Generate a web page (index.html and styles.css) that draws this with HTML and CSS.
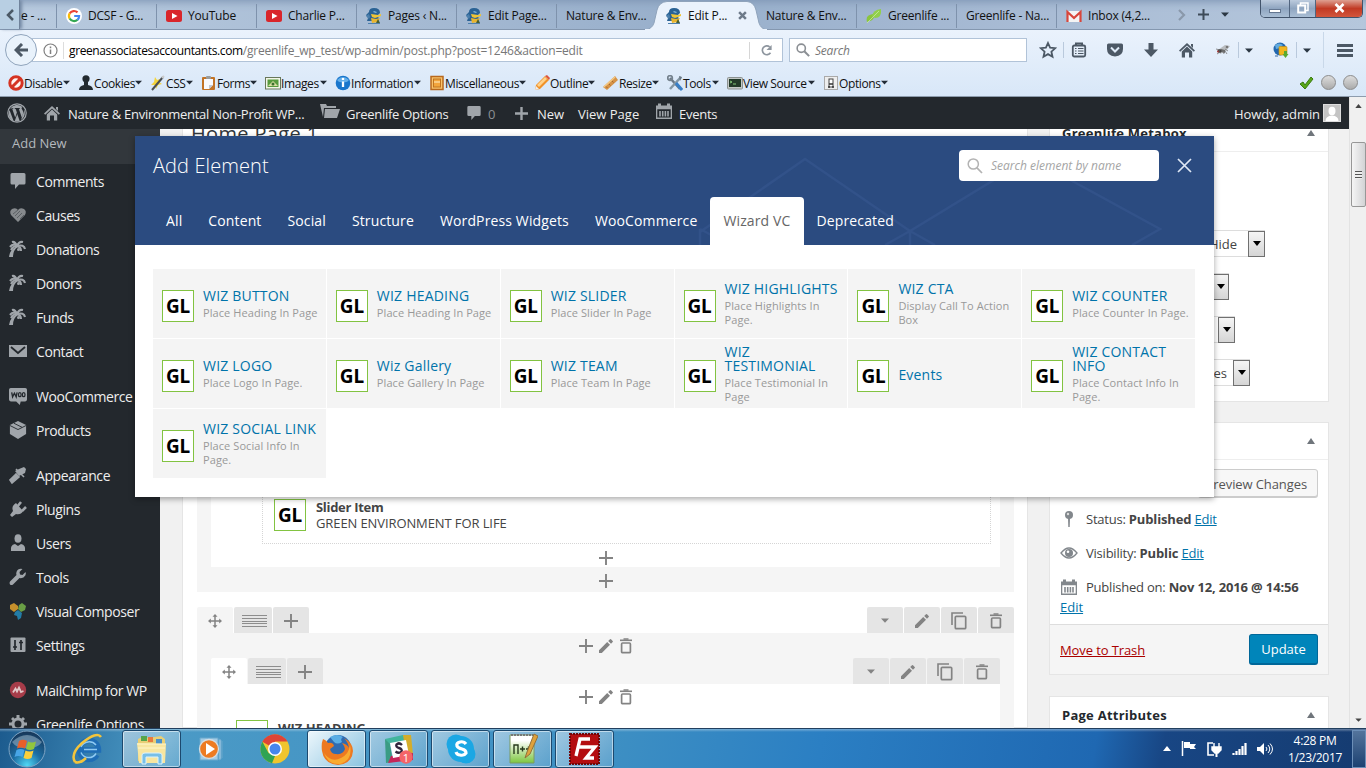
FILE: index.html
```html
<!DOCTYPE html>
<html lang="en">
<head>
<meta charset="utf-8">
<title>Edit Page</title>
<link rel="stylesheet" href="styles.css">
</head>
<body>
<svg class="defs" width="0" height="0">
<symbol id="google" viewBox="0 0 16 16"><circle cx="8" cy="8" r="8" fill="#fff"/><path d="M3.7 5.5A5 5 0 0 1 11.5 4.4" stroke="#ea4335" stroke-width="2.2" fill="none"/><path d="M3.7 5.4a5 5 0 0 0 0 5.2" stroke="#fbbc05" stroke-width="2.2" fill="none"/><path d="M3.7 10.5a5 5 0 0 0 7.8 1.2" stroke="#34a853" stroke-width="2.2" fill="none"/><path d="M8.2 8h4.9a5 5 0 0 1-1.7 3.8" stroke="#4285f4" stroke-width="2.2" fill="none"/></symbol>
<symbol id="yt" viewBox="0 0 16 16"><rect y="2" width="16" height="12" rx="2.5" fill="#d9252a"/><path d="M6 5l5.5 3L6 11z" fill="#fff"/></symbol>
<symbol id="gator" viewBox="0 0 16 16"><path d="M3 4Q3 0 8 0q6 0 6 5l-2 2 1 6H1l1-3-2-3z" fill="#2a6294"/><path d="M5 6l7 1 3-1v2l-6 2-3-1z" fill="#f0c534"/><path d="M5 10l5 1 4-1-2 4-6 1z" fill="#e9b52d"/><path d="M0 8l3-2 1 3-1 2zM2 15h12v1H2z" fill="#4d80ad"/><path d="M8 3l3 1-1 1-3-1z" fill="#7fb5dc"/><path d="M12 11l2 4h-4z" fill="#4a5f32"/></symbol>
<symbol id="leaf" viewBox="0 0 16 16"><path d="M1 14Q-1 7 7 6l1 3q-1 4-5 4z" fill="#8ac53e"/><path d="M6 8Q7 2 15 1q1 9-6 9z" fill="#91cf4c"/><path d="M1 15l12-12" stroke="#c8eaa2" stroke-width=".8" fill="none"/></symbol>
<symbol id="gmail" viewBox="0 0 16 16"><path d="M1 3h14v11H1z" fill="#f4f4f4"/><path d="M1.500 14V4L8 10l6.500-6v10" fill="none" stroke="#d8463b" stroke-width="2.2"/></symbol>
<symbol id="caret" viewBox="0 0 8 5"><path d="M0 .5h8L4 4.8z" fill="currentColor"/></symbol>
<symbol id="reload" viewBox="0 0 14 14"><path d="M11.3 9.5A4.8 4.8 0 1 1 10.4 3" fill="none" stroke="#8d959e" stroke-width="1.8"/><path d="M12.5 1v5.5H7z" fill="#8d959e"/></symbol>
<symbol id="mag" viewBox="0 0 16 16"><circle cx="6" cy="6" r="4.7" fill="none" stroke="currentColor" stroke-width="1.8"/><path d="M9.5 9.5l5.5 5.5" stroke="currentColor" stroke-width="2.4"/></symbol>
<symbol id="magthin" viewBox="0 0 16 16"><circle cx="6.3" cy="6" r="5.1" fill="none" stroke="#b3b3b3" stroke-width="1.5"/><path d="M10 9.8l5 5.2" stroke="#b3b3b3" stroke-width="1.7"/></symbol>
<symbol id="star" viewBox="0 0 18 18"><path d="M9 2l2.1 4.7 5.1.5-3.8 3.5 1.1 5-4.5-2.6-4.5 2.6 1.1-5L1.8 7.2l5.1-.5z" fill="none" stroke="#4c5865" stroke-width="1.8"/></symbol>
<symbol id="list" viewBox="0 0 16 16"><path d="M5 3V1.5h6V3" fill="none" stroke="#4c5865" stroke-width="2"/><rect x="1.8" y="3.5" width="12.4" height="11" rx="1.5" fill="#e3edf9" stroke="#4c5865" stroke-width="1.8"/><path d="M4 6.500h1.500M7 6.500h5.500M4 9h1.500M7 9h5.500M4 11.500h1.500M7 11.500h5.500" stroke="#4c5865" stroke-width="1.2"/></symbol>
<symbol id="pocket" viewBox="0 0 16 16"><path d="M1.5 1.5h13Q16 1.5 16 3v4q0 7-8 7.5Q0 14 0 7V3q0-1.500 1.500-1.500z" fill="#4c5865"/><path d="M4 5.500l4 4 4-4" fill="none" stroke="#dfebf8" stroke-width="2"/></symbol>
<symbol id="down" viewBox="0 0 16 16"><path d="M5.500 1h5v6.500H15L8 15 1 7.500h4.500z" fill="#4c5865"/></symbol>
<symbol id="home" viewBox="0 0 16 16"><path d="M0 8.500L8 1l8 7.500-1.200 1.200L8 3.400 1.200 9.700zM12 2h2v4l-2-2z" fill="currentColor"/><path d="M2.800 9.400L8 4.500l5.200 4.900V15.500H10V10.500H6v5H2.800z" fill="currentColor"/></symbol>
<symbol id="fly" viewBox="0 0 16 16"><path d="M3 8l7-5 5 1-4 5-6 3z" fill="#b9bcbf"/><path d="M6 7l4 1 0 3-4-1z" fill="#6b6b6b"/><circle cx="4.500" cy="9" r="2" fill="#444"/><circle cx="12" cy="5" r="1.300" fill="#777"/><path d="M1 7l4 1M2 12l3-2M9 12l-1-3M13 9l-3-2M12 12l-2-3" stroke="#777" stroke-width=".8"/><circle cx="3" cy="9.500" r=".9" fill="#a33"/></symbol>
<symbol id="globe" viewBox="0 0 16 16"><circle cx="7" cy="7" r="6.500" fill="#2267ae"/><path d="M2 3q4-3 8 0l-3 3-4 1z" fill="#62abdf"/><rect x="6" y="4.500" width="8" height="8.500" rx="1" fill="#f2b51d" stroke="#c58b0d" stroke-width=".6"/><path d="M11 9h3v3h1.500l-3 4-3-4H11z" fill="#5aa92e"/><path d="M2 14h3" stroke="#3468a4"/></symbol>
<symbol id="pic-no" viewBox="0 0 16 16"><circle cx="8" cy="8" r="6.200" fill="#fff4f0" stroke="#d53322" stroke-width="3"/><path d="M4 12l8-8" stroke="#d53322" stroke-width="3"/></symbol>
<symbol id="pic-man" viewBox="0 0 16 16"><circle cx="8" cy="3.800" r="3.600" fill="#222a2f"/><path d="M6 6h4v4q5 1 5 5H1q0-4 5-5z" fill="#222a2f"/></symbol>
<symbol id="pic-css" viewBox="0 0 16 16"><path d="M5 2l2 3 3-1-1 3 3 2-4 1-2 4-1-4-4 0 3-3z" fill="#f3d43c"/><path d="M2 15L13 2" stroke="#4b5053" stroke-width="2"/><path d="M12 3l2-2" stroke="#ccc" stroke-width="2"/></symbol>
<symbol id="pic-forms" viewBox="0 0 16 16"><rect x="1" y="2" width="13" height="13" rx="1" fill="#c27326"/><path d="M3 4h9v6l-4 4H3z" fill="#f8faff"/><path d="M12 10l-4 4v-4z" fill="#bcc9d8"/><rect x="5" y="1" width="5" height="3" rx="1" fill="#9a9c9c"/></symbol>
<symbol id="pic-img" viewBox="0 0 16 16"><rect x=".5" y="2.500" width="15" height="11.500" fill="#f3f6e8" stroke="#69785b"/><rect x="2.500" y="4.500" width="11" height="7.500" fill="#579a3d"/><path d="M3 11l5-5 5 5z" fill="#d9dda0"/><circle cx="8" cy="9" r="1.500" fill="#3a702d"/></symbol>
<symbol id="pic-info" viewBox="0 0 16 16"><circle cx="8" cy="8" r="7.300" fill="#1976cc"/><path d="M2 5q6-6 12 0-2 3-6 2-4 1-6-2z" fill="#64afea"/><path d="M8 6.500V12M8 3v2" stroke="#fff" stroke-width="2.300"/></symbol>
<symbol id="pic-misc" viewBox="0 0 16 16"><rect x="2" y="1.500" width="12" height="13" fill="#f9c36b" stroke="#b8681d" stroke-width="1.500"/><rect x="4.500" y="4" width="7" height="8" fill="#f3a53c" stroke="#bf7421"/><path d="M5 7h6" stroke="#fff0c8"/></symbol>
<symbol id="pic-pencil" viewBox="0 0 16 16"><path d="M1 15l1-5L11 1l4 4-9 9z" fill="#f09128"/><path d="M3 10l8-8 2 2-8 8z" fill="#ffd18a"/><path d="M11 1l4 4 1-2-3-3z" fill="#dd563d"/><path d="M1 15l1-4 3 3z" fill="#eee"/></symbol>
<symbol id="pic-ruler" viewBox="0 0 16 16"><path d="M0 12L12 1l3 4L4 15z" fill="#d69347"/><path d="M1 12L12 2" stroke="#f4cb87" stroke-width="1.300"/><path d="M6 9l1.500 1.500M9 6l1.500 1.500M3 11.500l1.500 1.500" stroke="#a7692e"/></symbol>
<symbol id="pic-tools" viewBox="0 0 16 16"><path d="M3 3l10 11" stroke="#6b7986" stroke-width="2.500"/><circle cx="3" cy="3" r="2.300" fill="none" stroke="#75828e" stroke-width="1.800"/><path d="M14 2L3 14" stroke="#8597a3" stroke-width="2.500"/><path d="M9 8l6 7" stroke="#377fc8" stroke-width="3"/><path d="M12 1l3 1-2 4" fill="#6b7986"/></symbol>
<symbol id="pic-src" viewBox="0 0 16 16"><rect x=".5" y="2.500" width="15" height="11.500" rx="1" fill="#c3c8c6" stroke="#8c9291"/><rect x="2" y="4" width="12" height="8" fill="#233a28"/><path d="M3 6l2 1-2 1M6 9h3" stroke="#84c678" fill="none"/></symbol>
<symbol id="pic-opt" viewBox="0 0 16 16"><rect x="1.500" y="1.500" width="13" height="13" fill="#eee" stroke="#aaa"/><rect x="6" y="4" width="4" height="8" fill="#fff" stroke="#444"/><path d="M6 9h4M5 12h2M9 12h2" stroke="#333" stroke-width="1.500"/></symbol>
<symbol id="wp" viewBox="0 0 20 20"><circle cx="10" cy="10" r="9.200" fill="none" stroke="#a0a5aa" stroke-width="1.200"/><path d="M2.500 7l4.300 11.500q-5-2-5-8.500 0-1.600.7-3zM3.200 5.700A8.100 8.100 0 0 1 15.500 4q-1.300.5-.7 2l1 1.800q.7 1.600-.2 4.200l-.8 2.500L11.900 6l1-.2-.1-.7H7.800l-.1.700 1 .2 1.200 3.500-1.700 5L5.300 6l1-.2-.1-.7zM10.200 11l2.500 7q-2.500.8-4.900.1zM17.200 6.200q2.200 6.300-3.200 10.900l2.500-7.300q.7-2 .7-3.600z" fill="#a0a5aa"/></symbol>
<symbol id="folder" viewBox="0 0 20 16"><path d="M0 1h6l1 2h9v2H4L3 14z" fill="#a0a5aa"/><path d="M5 6h15l-3 9H4z" fill="#a0a5aa"/></symbol>
<symbol id="comment" viewBox="0 0 18 18"><path d="M3 1h12q1.500 0 1.500 1.500V11q0 1.500-1.500 1.500H10L6 17v-4.500H3Q1.500 12.500 1.500 11V2.500Q1.500 1 3 1z" fill="#a0a5aa"/></symbol>
<symbol id="cal" viewBox="0 0 18 18"><path d="M1 3.500h2V1.500h3v2h6v-2h3v2h2V17H1zM2.300 7.300v8.300h13.400V7.300z" fill="currentColor" fill-rule="evenodd"/><path d="M5 9v5.500M7.700 9v5.500M10.400 9v5.500M13 9v5.500" stroke="currentColor" stroke-width="1.600"/></symbol>
<symbol id="heart" viewBox="0 0 18 18"><path d="M9 16L2 9Q0 5 3 3q4-2 6 1 2-3 6-1 3 2 1 6z" fill="#868a8d"/><path d="M4 8l5-4M6 10l5-5M8 12l5-5M11 13l4-4" stroke="#5b6064"/></symbol>
<symbol id="palm" viewBox="0 0 18 18"><path d="M9 7Q4 10 4 17H0Q1 9 8 6z" fill="#a0a5aa"/><path d="M8 6Q4 3 1 7M8 6Q6 1 3 2M8 6q2-5 6-4M8 6q7-2 8 3M8 6q4 1 4 5M8 6Q4 6 2 10" stroke="#a0a5aa" stroke-width="2.100" fill="none"/><circle cx="9.500" cy="9.500" r="1.500" fill="#a0a5aa"/></symbol>
<symbol id="mail" viewBox="0 0 18 18"><path d="M0 3h18v12H0z" fill="#a0a5aa"/><path d="M2 5l7 6 7-6" stroke="#23282d" stroke-width="1.800" fill="none"/></symbol>
<symbol id="woo" viewBox="0 0 20 20"><path d="M2 1h16q2 0 2 2v11q0 2-2 2h-5l-1 4-4-4H2q-2 0-2-2V3q0-2 2-2z" fill="#a0a5aa"/><path d="M3 6l1 5 2-4 2 4 1-5" fill="none" stroke="#23282d" stroke-width="1.500"/><ellipse cx="12" cy="8.500" rx="1.500" ry="2.300" fill="none" stroke="#23282d" stroke-width="1.400"/><ellipse cx="16.300" cy="8.500" rx="1.500" ry="2.300" fill="none" stroke="#23282d" stroke-width="1.400"/></symbol>
<symbol id="box" viewBox="0 0 20 20"><path d="M10 0l9 4.500v10L10 20l-9-5.500v-10z" fill="#a0a5aa"/><path d="M1 5l9 4.500L19 5M5.500 2.500l9 4.500" stroke="#23282d" fill="none"/></symbol>
<symbol id="brush" viewBox="0 0 18 18"><path d="M10 3l5-2 2 2-1 4-6 3-4-5z" fill="#a0a5aa"/><path d="M7 3l8 8M7 8L1 14l2 3 7-6z" stroke="#a0a5aa" stroke-width="1.600" fill="#a0a5aa"/></symbol>
<symbol id="plug" viewBox="0 0 18 18"><path d="M7 3q-5 3-3 8l-3 4 2 2 4-3q5 1 7-3z" fill="#a0a5aa"/><path d="M8 7l4-5M13 11l4-4" stroke="#a0a5aa" stroke-width="2.600"/></symbol>
<symbol id="user" viewBox="0 0 18 18"><ellipse cx="9" cy="4.500" rx="3.500" ry="4.300" fill="#a0a5aa"/><path d="M2 17q-1-6 4-7l3 2 3-2q5 1 4 7z" fill="#a0a5aa"/></symbol>
<symbol id="wrench" viewBox="0 0 18 18"><path d="M16.500 4l-3 3-2.500-.5L10.500 4 13.500 1Q9 0 7.500 4q-.6 2 0 3L1 13.500q-1 1.500 0 3 1.500 1 3 0L10.500 10q4 .7 5.800-2.500 1-2 .2-3.500z" fill="#a0a5aa"/></symbol>
<symbol id="vc" viewBox="0 0 18 18"><path d="M1 3l4-2 4 3v3L5 10 1 7z" fill="#c6902c"/><path d="M10 3l3-2 4 3-1 4-4 2-3-3z" fill="#699e45"/><path d="M6 10l3-2 4 3-1 5-3 2-1-4-3-1z" fill="#237ca6"/></symbol>
<symbol id="sliders" viewBox="0 0 18 18"><rect x="1.500" y="1.500" width="15" height="14.500" rx="1" fill="#a0a5aa"/><path d="M6 4v10M12 4v10M4 11h4M10 6.500h4" stroke="#23282d" stroke-width="1.700"/></symbol>
<symbol id="chimp" viewBox="0 0 18 18"><circle cx="9" cy="9" r="8.200" fill="#a63c49"/><path d="M4 11.500l2.500-4 1.500 3 2-4 2 4.500 2.500-1" fill="none" stroke="#e2c8c9" stroke-width="1.800"/></symbol>
<symbol id="gear" viewBox="0 0 18 18"><path d="M7.500 0h3v3h-3zM7.500 15h3v3h-3zM0 7.500h3v3H0zM15 7.500h3v3h-3zM2 4l2-2 3 3-2 2zM14 2l2 2-3 3-2-2zM2 14l3-3 2 2-3 3zM16 14l-2 2-3-3 2-2z" fill="#a0a5aa"/><circle cx="9" cy="9" r="5" fill="none" stroke="#a0a5aa" stroke-width="3"/></symbol>
<symbol id="plus" viewBox="0 0 14 14"><path d="M7 0v14M0 7h14" stroke="#838383" stroke-width="1.900"/></symbol>
<symbol id="pencil" viewBox="0 0 14 14"><path d="M0 11.200V14h2.800L11 5.800 8.200 3zM9.200 2l2.800 2.800L13.700 3q.4-.5 0-1L12 .3q-.5-.4-1 0z" fill="#838383"/></symbol>
<symbol id="trash" viewBox="0 0 14 16"><path d="M1 2.300h12" stroke="#838383" stroke-width="1.600"/><path d="M4.500 1h5" stroke="#838383" stroke-width="1.500"/><rect x="2.600" y="5" width="8.800" height="9.700" rx="1" fill="none" stroke="#838383" stroke-width="1.700"/></symbol>
<symbol id="copy" viewBox="0 0 16 18"><path d="M1 13V1h11" fill="none" stroke="#838383" stroke-width="1.600"/><rect x="4.300" y="4.300" width="10.400" height="12.400" rx="1" fill="none" stroke="#838383" stroke-width="1.700"/></symbol>
<symbol id="move" viewBox="0 0 14 14"><path d="M7 1.500v11M1.500 7h11" stroke="#838383" stroke-width="1.500"/><path d="M7 0l2.500 2.800h-5zM7 14l2.500-2.800h-5zM0 7l2.800-2.500v5zM14 7l-2.800-2.500v5z" fill="#838383"/></symbol>
<symbol id="lines" viewBox="0 0 25 12"><path d="M0 .5h25M0 3.500h25M0 6.500h25M0 8.500h25M0 11.500h25" stroke="#8d8d8d" stroke-width="1"/></symbol>
<symbol id="pin" viewBox="0 0 10 18"><circle cx="5" cy="5" r="4" fill="#82878c"/><path d="M4 8h2l-.3 9h-1.400z" fill="#82878c"/><circle cx="4" cy="4" r="1.200" fill="#dedede"/></symbol>
<symbol id="eye" viewBox="0 0 18 12"><path d="M1 6q8-10 16 0-8 10-16 0z" fill="none" stroke="#82878c" stroke-width="1.300"/><circle cx="9" cy="6" r="4" fill="#82878c"/><circle cx="8" cy="4.800" r="1.300" fill="#fff"/></symbol>
</svg>

<header class="browser">
  <div class="tabs">
    <div class="scroll-left"><svg width="8" height="12" viewBox="0 0 8 12"><path d="M7 1L2 6l5 5" fill="none" stroke="#4b5966" stroke-width="2.500"/></svg></div>
    <div class="tab first">e - ...</div>
    <div class="tab"><svg><use href="#google"/></svg>DCSF - G...</div>
    <div class="tab"><svg><use href="#yt"/></svg>YouTube</div>
    <div class="tab"><svg><use href="#yt"/></svg>Charlie P...</div>
    <div class="tab"><svg><use href="#gator"/></svg>Pages ‹ N...</div>
    <div class="tab"><svg><use href="#gator"/></svg>Edit Page...</div>
    <div class="tab">Nature &amp; Env...</div>
    <div class="tab active">
      <svg class="shape" viewBox="0 0 122 30"><path d="M0 30Q7 29 9 23L12 10Q14 2 22 1.500H102Q109 2 111 10l3 13q2 6 8 7z" fill="#eaf2fc" stroke="#8fa3bb"/><path d="M0 30h122" stroke="#eaf2fc" stroke-width="2"/></svg>
      <svg><use href="#gator"/></svg><span class="lbl">Edit P...</span><svg class="x" viewBox="0 0 8 8"><path d="M1 1l6 6M7 1L1 7" stroke="#6d7a89" stroke-width="2.200"/></svg></div>
    <div class="tab">Nature &amp; Env...</div>
    <div class="tab"><svg><use href="#leaf"/></svg>Greenlife ...</div>
    <div class="tab">Greenlife - Na...</div>
    <div class="tab"><svg><use href="#gmail"/></svg>Inbox (4,2...</div>
    <div class="tab-tools">
      <svg width="8" height="12" viewBox="0 0 8 12"><path d="M1 1l5 5-5 5" fill="none" stroke="#8a98aa" stroke-width="2.200"/></svg>
      <svg width="11" height="11" viewBox="0 0 11 11"><path d="M5.500 0v11M0 5.500h11" stroke="#3e4b58" stroke-width="2"/></svg>
      <svg width="8" height="5" color="#2b3743"><use href="#caret"/></svg>
    </div>
    <div class="win"><span class="min"><i></i></span><span class="max"><svg width="12" height="12" viewBox="0 0 12 12"><path d="M3.500 3V1h7.500v7.500H9" fill="none" stroke="#fff" stroke-width="1.500"/><rect x="1.200" y="3.500" width="7" height="7" fill="none" stroke="#fff" stroke-width="2"/></svg></span><span class="cls"><svg width="11" height="10" viewBox="0 0 11 10"><path d="M1.500 1l8 8M9.500 1l-8 8" stroke="#fff" stroke-width="2.600"/></svg></span></div>
  </div>
  <div class="nav">
    <div class="back"><svg width="15" height="14" viewBox="0 0 15 14"><path d="M8 1L2 7l6 6M2.500 7H14" fill="none" stroke="#4c5865" stroke-width="3"/></svg></div>
    <div class="url">
      <svg class="i" width="15" height="15" viewBox="0 0 15 15"><circle cx="7.500" cy="7.500" r="6.500" fill="none" stroke="#808080" stroke-width="1.200"/><path d="M7.500 6.500v4.500M7.500 3.500v1.700" stroke="#808080" stroke-width="1.500"/></svg>
      <span class="addr"><b>greenassociatesaccountants.com</b><em>/greenlife_wp_test/wp-admin/post.php?post=1246&amp;action=edit</em></span>
      <span class="rl"><svg width="13" height="13"><use href="#reload"/></svg></span>
    </div>
    <div class="search"><svg width="14" height="14" color="#8b8f94"><use href="#mag"/></svg><span>Search</span></div>
    <div class="icons">
      <svg><use href="#star"/></svg><svg><use href="#list"/></svg><svg><use href="#pocket"/></svg><svg><use href="#down"/></svg><svg color="#4c5865"><use href="#home"/></svg><svg><use href="#fly"/></svg><svg class="c"><use href="#caret"/></svg><svg><use href="#globe"/></svg><svg class="c"><use href="#caret"/></svg><i class="burger"></i>
    </div>
  </div>
  <div class="devbar">
    <span><svg><use href="#pic-no"/></svg><b>Disable</b><svg class="c"><use href="#caret"/></svg></span>
    <span><svg><use href="#pic-man"/></svg><b>Cookies</b><svg class="c"><use href="#caret"/></svg></span>
    <span><svg><use href="#pic-css"/></svg><b>CSS</b><svg class="c"><use href="#caret"/></svg></span>
    <span><svg><use href="#pic-forms"/></svg><b>Forms</b><svg class="c"><use href="#caret"/></svg></span>
    <span><svg><use href="#pic-img"/></svg><b>Images</b><svg class="c"><use href="#caret"/></svg></span>
    <span><svg><use href="#pic-info"/></svg><b>Information</b><svg class="c"><use href="#caret"/></svg></span>
    <span><svg><use href="#pic-misc"/></svg><b>Miscellaneous</b><svg class="c"><use href="#caret"/></svg></span>
    <span><svg><use href="#pic-pencil"/></svg><b>Outline</b><svg class="c"><use href="#caret"/></svg></span>
    <span><svg><use href="#pic-ruler"/></svg><b>Resize</b><svg class="c"><use href="#caret"/></svg></span>
    <span><svg><use href="#pic-tools"/></svg><b>Tools</b><svg class="c"><use href="#caret"/></svg></span>
    <span><svg><use href="#pic-src"/></svg><b>View Source</b><svg class="c"><use href="#caret"/></svg></span>
    <span><svg><use href="#pic-opt"/></svg><b>Options</b><svg class="c"><use href="#caret"/></svg></span>
    <div class="status"><svg width="15" height="14" viewBox="0 0 15 14"><path d="M1 8l3-2 2 3 6-8 2 2-8 10z" fill="#58a618" stroke="#3b7c10"/></svg><i></i><i></i></div>
  </div>
</header>

<div class="viewport">
<div class="content">
  <div class="adminbar">
    <span><svg width="20" height="20"><use href="#wp"/></svg></span>
    <span><svg width="16" height="16" color="#a0a5aa"><use href="#home"/></svg></span>
    <span class="t1">Nature &amp; Environmental Non-Profit WP...</span>
    <span><svg class="up" width="20" height="16"><use href="#folder"/></svg></span>
    <span class="t1">Greenlife Options</span>
    <span><svg width="16" height="16"><use href="#comment"/></svg></span>
    <span class="dim">0</span>
    <span><svg width="13" height="13" viewBox="0 0 13 13"><path d="M6.500 0v13M0 6.500h13" stroke="#a0a5aa" stroke-width="2.400"/></svg></span>
    <span>New</span>
    <span>View Page</span>
    <span><svg class="up" width="18" height="18" color="#a0a5aa"><use href="#cal"/></svg></span>
    <span class="t1">Events</span>
    <span class="howdy">Howdy, admin</span>
    <span class="avatar"><svg width="16" height="16" viewBox="0 0 16 16"><rect width="16" height="16" fill="#c4c4c4"/><ellipse cx="8" cy="6" rx="3.500" ry="4.200" fill="#fff"/><path d="M1.500 16q0-5 6.500-5.500 6.500.5 6.500 5.500z" fill="#fff"/></svg></span>
  </div>
  <div class="body">
    <nav class="side">
      <div class="sub">Add New</div>
      <a><svg><use href="#comment"/></svg>Comments</a>
      <a><svg><use href="#heart"/></svg>Causes</a>
      <a><svg><use href="#palm"/></svg>Donations</a>
      <a><svg><use href="#palm"/></svg>Donors</a>
      <a><svg><use href="#palm"/></svg>Funds</a>
      <a><svg><use href="#mail"/></svg>Contact</a>
      <a class="gap"><svg><use href="#woo"/></svg>WooCommerce</a>
      <a><svg><use href="#box"/></svg>Products</a>
      <a class="gap"><svg><use href="#brush"/></svg>Appearance</a>
      <a><svg><use href="#plug"/></svg>Plugins</a>
      <a><svg><use href="#user"/></svg>Users</a>
      <a><svg><use href="#wrench"/></svg>Tools</a>
      <a><svg><use href="#vc"/></svg>Visual Composer</a>
      <a><svg><use href="#sliders"/></svg>Settings</a>
      <a class="gap"><svg><use href="#chimp"/></svg>MailChimp for WP</a>
      <a><svg><use href="#gear"/></svg>Greenlife Options</a>
    </nav>
    <main class="editor">
      <div class="title">Home Page 1</div>
      <section class="row-a">
        <div class="inner">
          <div class="item"><span class="gl">GL</span><p><b>Slider Item</b>GREEN ENVIRONMENT FOR LIFE</p></div>
          <svg class="add" width="14" height="14"><use href="#plus"/></svg>
        </div>
        <svg class="add" width="14" height="14"><use href="#plus"/></svg>
      </section>
      <div class="controls">
        <span class="mv"><svg width="14" height="14"><use href="#move"/></svg></span><span class="ln"><svg width="25" height="12"><use href="#lines"/></svg></span><span><svg width="14" height="14"><use href="#plus"/></svg></span>
        <span class="r"><svg width="8" height="5" color="#838383"><use href="#caret"/></svg></span><span><svg width="14" height="14"><use href="#pencil"/></svg></span><span><svg width="16" height="18"><use href="#copy"/></svg></span><span><svg width="14" height="16"><use href="#trash"/></svg></span>
      </div>
      <section class="row-b">
        <div class="tools"><svg width="14" height="14"><use href="#plus"/></svg><svg width="14" height="14"><use href="#pencil"/></svg><svg width="14" height="16"><use href="#trash"/></svg></div>
        <div class="controls nested">
          <span class="mv"><svg width="14" height="14"><use href="#move"/></svg></span><span class="ln"><svg width="25" height="12"><use href="#lines"/></svg></span><span><svg width="14" height="14"><use href="#plus"/></svg></span>
          <span class="r"><svg width="8" height="5" color="#838383"><use href="#caret"/></svg></span><span><svg width="14" height="14"><use href="#pencil"/></svg></span><span><svg width="16" height="18"><use href="#copy"/></svg></span><span><svg width="14" height="16"><use href="#trash"/></svg></span>
        </div>
        <div class="inner2">
          <div class="tools"><svg width="14" height="14"><use href="#plus"/></svg><svg width="14" height="14"><use href="#pencil"/></svg><svg width="14" height="16"><use href="#trash"/></svg></div>
          <div class="item2"><span class="gl"></span><b>WIZ HEADING</b></div>
        </div>
      </section>
    </main>
    <aside class="meta">
      <div class="mbox m1">
        <h3 class="mh">Greenlife Metabox<i></i></h3>
        <div class="sel s1">Hide<i></i></div>
        <div class="sel s2"><i></i></div>
        <div class="sel s3"><i></i></div>
        <div class="sel s4">es<i></i></div>
      </div>
      <div class="mbox m2">
        <h3 class="mh"><i></i></h3>
        <div class="preview">Preview Changes</div>
        <p><span class="ic"><svg width="10" height="18"><use href="#pin"/></svg></span>Status:&nbsp;<b>Published</b>&nbsp;<u>Edit</u></p>
        <p><span class="ic"><svg width="18" height="12"><use href="#eye"/></svg></span>Visibility:&nbsp;<b>Public</b>&nbsp;<u>Edit</u></p>
        <p class="pub"><span class="ic"><svg width="18" height="18" color="#82878c"><use href="#cal"/></svg></span>Published on:&nbsp;<b>Nov 12, 2016 @ 14:56</b></p>
        <u class="last">Edit</u>
        <div class="foot"><u>Move to Trash</u><span>Update</span></div>
      </div>
      <div class="mbox m3"><h3 class="mh">Page Attributes<i></i></h3></div>
    </aside>
  </div>
</div>
<div class="scrollbar"><svg class="au" width="7" height="4" viewBox="0 0 8 5"><path d="M0 5h8L4 0z" fill="#444"/></svg><div class="thumb"><i></i></div><svg class="ad" width="7" height="4" color="#444"><use href="#caret"/></svg></div>
</div>

<div class="modal">
  <div class="mhead">
    <svg class="deco" viewBox="0 0 1079 109"><path d="M565 96L670 23l105 72 120-73 130 71-28 16M565 93l30 16M775 95v14M775 95l-25 14M775 95l25 14M565 93v16" fill="none" stroke="#325289" stroke-width="2.500"/></svg>
    <div class="mtop"><h2>Add Element</h2><div class="msearch"><svg width="16" height="16"><use href="#magthin"/></svg><span>Search element by name</span></div><svg class="mx" width="15" height="15" viewBox="0 0 15 15"><path d="M1 1l13 13M14 1L1 14" stroke="#dfe8f5" stroke-width="1.700"/></svg></div>
    <div class="mtabs"><span>All</span><span>Content</span><span>Social</span><span>Structure</span><span>WordPress Widgets</span><span>WooCommerce</span><span class="on">Wizard VC</span><span>Deprecated</span></div>
  </div>
  <div class="grid">
    <div><span class="gl">GL</span><p><b>WIZ BUTTON</b>Place Heading In Page</p></div>
    <div><span class="gl">GL</span><p><b>WIZ HEADING</b>Place Heading In Page</p></div>
    <div><span class="gl">GL</span><p><b>WIZ SLIDER</b>Place Slider In Page</p></div>
    <div><span class="gl">GL</span><p><b>WIZ HIGHLIGHTS</b>Place Highlights In<br>Page.</p></div>
    <div><span class="gl">GL</span><p><b>WIZ CTA</b>Display Call To Action<br>Box</p></div>
    <div><span class="gl">GL</span><p><b>WIZ COUNTER</b>Place Counter In Page.</p></div>
    <div><span class="gl">GL</span><p><b>WIZ LOGO</b>Place Logo In Page.</p></div>
    <div><span class="gl">GL</span><p><b>Wiz Gallery</b>Place Gallery In Page</p></div>
    <div><span class="gl">GL</span><p><b>WIZ TEAM</b>Place Team In Page</p></div>
    <div><span class="gl">GL</span><p><b>WIZ<br>TESTIMONIAL</b>Place Testimonial In<br>Page</p></div>
    <div><span class="gl">GL</span><p class="solo"><b>Events</b></p></div>
    <div><span class="gl">GL</span><p><b>WIZ CONTACT<br>INFO</b>Place Contact Info In<br>Page.</p></div>
    <div><span class="gl">GL</span><p><b>WIZ SOCIAL LINK</b>Place Social Info In<br>Page.</p></div>
  </div>
</div>

<footer class="taskbar">
  <div class="tb orb"><svg width="38" height="38" viewBox="0 0 38 38"><defs><radialGradient id="og" cx=".5" cy=".95" r=".9"><stop offset="0" stop-color="#4fd8f5"/><stop offset=".45" stop-color="#1d6fa5"/><stop offset="1" stop-color="#17395c"/></radialGradient></defs><circle cx="19" cy="19" r="18" fill="url(#og)" stroke="#7ea5c5"/><path d="M4 12q15-14 30 0-5 7-15 6-10 1-15-6z" fill="#9db6c8" opacity=".55"/><path d="M11 11q4-2.500 8 0l-2 7.500q-4-2-8 0z" fill="#e8602a"/><path d="M20 11.500q4 2 8 0l-2 7.500q-4 2-8 0z" fill="#92c63d"/><path d="M8.500 20q4-2 8 0l-2 7q-4-2-8 0z" fill="#48a5e6"/><path d="M17.500 20.500q4 2 8 0l-2 7.500q-4 2-8 0z" fill="#fbcf3b"/></svg></div>
  <div class="tb ie"><svg width="32" height="32" viewBox="0 0 32 32"><path d="M25 22a9.500 9.500 0 1 1 1.500-5H10" fill="none" stroke="#1f6db5" stroke-width="5.500"/><path d="M24 20.500a8.500 8.500 0 0 1-15-1M9 14a9 9 0 0 1 15-2M12 16.500h13" fill="none" stroke="#8ecaf2" stroke-width="1.500"/><path d="M3 29Q-2 21 10 10 25-2 29 4M3 29q5 2 11-4" fill="none" stroke="#f3c43c" stroke-width="2.500"/></svg></div>
  <div class="tb btn"><svg width="34" height="32" viewBox="0 0 34 32"><path d="M3 6l6-3 4 2 13-2 4 3v22H3z" fill="#e8cf76"/><path d="M6 3h6v5H6z" fill="#56a54b"/><path d="M13 4h5v5h-5z" fill="#e9793e"/><path d="M21 6h6v5h-6z" fill="#4a91cc"/><path d="M2 10l29 1-1 19H4z" fill="#f8e6a0"/><path d="M2 11h29M3 15h27" stroke="#fff5cc"/><path d="M7 31v-9q0-2 3-2h14q3 0 3 2v9h-4v-7H11v7z" fill="#78bfe7" stroke="#daf3ff"/></svg></div>
  <div class="tb wmp"><svg width="28" height="28" viewBox="0 0 28 28"><path d="M3 3h18v22H3zM22 4l2 1v19l-2 1zM25 6v17" fill="#a3cce6" stroke="#69a7cc"/><circle cx="12" cy="14" r="9.500" fill="#ed7b22" stroke="#d4dde3" stroke-width="1.300"/><path d="M9 8l9 6-9 6z" fill="#fff"/></svg></div>
  <div class="tb chr"><svg width="30" height="30" viewBox="0 0 30 30"><circle cx="15" cy="15" r="14.500" fill="#f0c52e"/><path d="M15 15L2.400 7.700A14.500 14.500 0 0 1 27.500 7.500H15z" fill="#df4437"/><path d="M2.400 7.700L8.500 19 15 22l-3 7.200A14.500 14.500 0 0 1 2.400 7.700z" fill="#30a354"/><circle cx="15" cy="15" r="7" fill="#fff"/><circle cx="15" cy="15" r="5.500" fill="#4686ed"/></svg></div>
  <div class="tb btn lit"><svg width="32" height="32" viewBox="0 0 32 32"><circle cx="17" cy="15" r="13" fill="#306bb1"/><path d="M9 4q7-4 13 0-3 2-1 5-5 3-8 0z" fill="#5aaee5"/><path d="M2 6q3 1 5 4 5-1 6 3l-4 3q1 5 6 5 7 1 9-5-1-4-3-6 5 1 7 5-1-6-5-10 9 5 9 13-1 13-15 14Q3 31 1 18 0 11 2 6z" fill="#ed7921"/><path d="M3 20q7 10 17 5 8-4 9-13 3 16-10 19-12 1-16-11z" fill="#f9ab30"/></svg></div>
  <div class="tb btn"><svg width="30" height="30" viewBox="0 0 30 30"><path d="M1 5L19 1l3 6L5 11z" fill="#42b59d"/><path d="M19 1l8 0 2 20-7-2z" fill="#d5ad2a"/><path d="M1 5l5 5 3 18-7 1z" fill="#3a9c84"/><path d="M4 29l3-7 22-3v7z" fill="#c5265a"/><path d="M6 9l16-3 3 15-16 3z" fill="#fff"/><path d="M18 11q-3-3-5.500-.5-1 2.500 2.500 3.500t2.500 3.500q-2.500 2.500-6 0" fill="none" stroke="#30253b" stroke-width="2.400"/><circle cx="22" cy="23" r="6.700" fill="#f46467"/></svg><i class="badge">1</i></div>
  <div class="tb btn"><svg width="30" height="30" viewBox="0 0 30 30"><circle cx="10" cy="10" r="9.500" fill="#1ba7e4"/><circle cx="20" cy="20" r="9.500" fill="#1ba7e4"/><circle cx="15" cy="15" r="13" fill="#1ba7e4"/><path d="M20 10q-2-3-6-2-4 1-3 4 1 2 5 3t4 4q-2 3-6 2-3 0-4-3" fill="none" stroke="#fff" stroke-width="3.200"/></svg></div>
  <div class="tb btn"><svg width="30" height="32" viewBox="0 0 30 32"><defs><linearGradient id="ng" x2="0" y2="1"><stop offset=".2" stop-color="#fff"/><stop offset="1" stop-color="#7cc63e"/></linearGradient></defs><path d="M2 2h24v28H2z" fill="url(#ng)" stroke="#7b9a63"/><path d="M3 2h22" stroke="#777" stroke-width="2" stroke-dasharray="2 1"/><path d="M6 21v-9h4v9M12 16h5M14.500 13.500v5M18 16h5M20.500 13.500v5" fill="none" stroke="#27391d" stroke-width="1.400"/><path d="M17 25l2-6L26 1l4 2-8 18z" fill="#dfa23c" stroke="#92713b"/></svg></div>
  <div class="tb btn"><svg width="31" height="32" viewBox="0 0 31 32"><rect x="1" y="1" width="29" height="30" fill="#b40d10" stroke="#710608" stroke-width="2" stroke-dasharray="2 1"/><path d="M7 23L11 6h10M9 14h9M17 14h9l-9 11h8" fill="none" stroke="#fff" stroke-width="3.300"/></svg></div>
  <div class="tray">
    <svg width="8" height="5" viewBox="0 0 8 5"><path d="M0 5h8L4 0z" fill="#fff"/></svg>
    <svg width="16" height="15" viewBox="0 0 16 15"><path d="M1.500 0v15" stroke="#fff" stroke-width="1.500"/><path d="M3 1h6v2h6l-2 3 2 2H9V7H3z" fill="#fff"/></svg>
    <svg width="15" height="16" viewBox="0 0 15 16"><path d="M6 2H1v12h6" fill="none" stroke="#fff" stroke-width="1.600"/><path d="M5 6h9v3l-3 3H8L5 9zM7 2v4M12 2v4" fill="#fff" stroke="#fff" stroke-width="1.400"/><path d="M9.500 11v5" stroke="#fff" stroke-width="2"/></svg>
    <svg width="15" height="12" viewBox="0 0 15 12"><path d="M1.500 12v-2M4.500 12V8M7.500 12V6M10.500 12V3M13.500 12V0" stroke="#fff" stroke-width="2.200"/></svg>
    <svg width="16" height="14" viewBox="0 0 16 14"><path d="M0 5h3l4-4v12L3 9H0z" fill="#fff"/><path d="M9 5q2 2 0 4M11 3q3.500 4 0 8M13 1.500q5 5.500 0 11" fill="none" stroke="#fff" stroke-width="1"/></svg>
  </div>
  <div class="clock"><span>4:28 PM</span><span>1/23/2017</span></div>
  <div class="desk"></div>
</footer>
</body>
</html>
```
FILE: styles.css
```css
* { box-sizing: border-box; }
body { margin: 0; width: 1366px; height: 768px; overflow: hidden; position: relative; display: flex; flex-direction: column; font-family: "Open Sans", "Noto Sans", sans-serif; font-size: 12px; color: #111; }
svg { flex: none; display: block; }
i, em { font-style: normal; }
p, h2, h3 { margin: 0; }
.defs { position: absolute; }

/* browser chrome */
.browser { height: 97px; flex: none; background: linear-gradient(#eaf2fc 30px, #d8e7f8 97px); border-bottom: 1px solid #8d9cad; }
.tabs { height: 30px; display: flex; background: linear-gradient(100deg, #b9cbdf 0, #a9bdd5 25%, #98afcb 50%, #a8bbd4 75%, #b5c7dc 100%); border-bottom: 1px solid #8497af; box-shadow: inset 0 10px 9px -8px #7f96b5; }
.scroll-left { width: 20px; display: flex; align-items: center; padding-left: 6px; background: #b8cfe3; border-right: 1px solid #70839b; box-shadow: 2px 0 3px #7489a4; }
.tab { width: 100px; flex: none; display: flex; align-items: center; gap: 6px; padding: 2px 0 0 9px; border-left: 1px solid transparent; border-image: linear-gradient(transparent 5px, #7e92ac 5px 27px, transparent 27px) 1; white-space: nowrap; font-size: 12px; letter-spacing: -.2px; position: relative; }
.tab > svg { width: 16px; height: 16px; }
.tab.first { width: 36px; border: 0; padding-left: 1px; }
.tab.active { border: 0; padding-left: 10px; z-index: 2; }
.tab.active + .tab { border: 0; padding-left: 10px; }
.tab.active > .shape { position: absolute; left: -11px; top: 0; width: 122px; height: 30px; }
.tab.active > svg, .lbl { position: relative; }
.tab.active > .x { width: 9px; height: 9px; margin-left: 5px; }
.tab-tools { display: flex; align-items: center; gap: 12px; padding-left: 22px; width: 104px; }
.win { display: flex; height: 18px; width: 103px; border: 1px solid #41536b; border-top: 0; border-radius: 0 0 5px 5px; overflow: hidden; }
.win span { display: flex; align-items: center; justify-content: center; padding-bottom: 2px; background: linear-gradient(#bccbdd, #8fa5c0 50%, #a9bed5); border-right: 1px solid #51657f; }
.min { width: 29px; } .max { width: 26px; }
.win .cls { flex: 1; border: 0; background: linear-gradient(#dea091, #c13a24 50%, #d3563c); }
.min i { width: 12px; height: 4px; background: #fff; margin-top: 7px; border: 1px solid #647791; }
.nav { height: 38px; display: flex; align-items: center; padding-top: 2px; }
.back { width: 32px; height: 32px; margin-left: 5px; border: 1px solid #90a4bc; border-radius: 50%; background: #e9f2fb; display: flex; align-items: center; justify-content: center; z-index: 1; }
.url { margin-left: -5px; width: 751px; height: 24px; border: 1px solid #b1c3d8; background: #fff; display: flex; align-items: center; }
.url .i { margin-left: 10px; }
.addr { margin-left: 5px; padding-left: 5px; border-left: 1px solid #ddd; white-space: nowrap; flex: 1; line-height: 17px; }
.addr b { font-weight: 400; color: #000; letter-spacing: -.39px; } .addr em { color: #777; letter-spacing: -.2px; }
.rl { border-left: 1px solid #d6d6d6; height: 17px; width: 33px; display: flex; align-items: center; justify-content: center; }
.search { margin-left: 6px; width: 238px; height: 24px; border: 1px solid #b1c3d8; background: #fff; display: flex; align-items: center; gap: 5px; padding-left: 6px; color: #777; font-style: italic; letter-spacing: -.2px; }
.icons { flex: 1; height: 36px; display: grid; grid-template-columns: 42px 20px 52px 20px 52px 20px 32px 32px 20px 49px; align-items: center; justify-items: center; background: linear-gradient(#b9c9dc, #b9c9dc) 36px 10px / 1px 16px no-repeat, linear-gradient(#b9c9dc, #b9c9dc) 211px 10px / 1px 16px no-repeat, linear-gradient(#b9c9dc, #b9c9dc) 269px 10px / 1px 16px no-repeat, linear-gradient(#c9d8e9, #c9d8e9) 296px 0 / 1px 36px no-repeat; }
.icons svg { width: 16px; height: 16px; }
.icons svg:nth-child(1) { width: 18px; height: 18px; }
.icons svg.c { width: 8px; height: 5px; color: #2b3743; }
.icons .burger { margin-left: 7px; width: 16px; height: 13px; border-top: 3px solid #4c5865; border-bottom: 3px solid #4c5865; background: linear-gradient(transparent 2px, #4c5865 2px 5px, transparent 5px); }
.devbar { height: 29px; padding-left: 8px; display: grid; grid-template-columns: 70px 72px 51px 64px 70px 94px 105px 69px 64px 60px 96px 73px 1fr; align-items: center; }
.devbar span { display: flex; align-items: center; padding-right: 8px; white-space: nowrap; }
.devbar span svg { width: 16px; height: 16px; }
.devbar span svg.c { width: 7px; height: 5px; margin-left: auto; color: #222b36; }
.devbar b { font-weight: 400; letter-spacing: -.4px; padding-top: 1px; }
.status { display: flex; justify-content: flex-end; align-items: center; gap: 7px; padding-right: 8px; }
.status i { width: 15px; height: 15px; border-radius: 50%; border: 1px solid #8b8b8b; background: linear-gradient(#ddd, #aaa); }

/* admin bar */
.viewport { height: 631px; display: flex; flex: none; }
.content { width: 1349px; background: #f1f1f1; display: flex; flex-direction: column; overflow: hidden; }
.adminbar { position: relative; z-index: 2; height: 32px; flex: none; background: #23282d; color: #eee; font-size: 13px; display: grid; grid-template-columns: 44px 24px 252px 26px 120px 22px 27px 22px 41px 77px 24px 555px 89px 26px; align-items: center; white-space: nowrap; padding-top: 2px; }
.adminbar .t1 { letter-spacing: -.27px; } .howdy { letter-spacing: -.1px; }
.adminbar span:first-child { padding-left: 7px; }
.adminbar svg { margin-top: -2px; } .adminbar .up { margin-top: -7px; }
.dim { color: #8a8f94; }
.avatar { width: 18px; height: 18px; border: 1px solid #ddd; margin-top: -2px; }
.adminbar .avatar svg { margin: 0; }
.body { display: flex; height: 599px; }

/* admin menu */
.side { width: 160px; background: #23282d; color: #eee; font-size: 14px; flex: none; }
.sub { height: 35px; background: #32373c; color: #b4b9be; font-size: 13px; padding: 5px 12px; line-height: 18px; }
.side a { height: 34px; display: flex; align-items: center; padding-left: 9px; gap: 9px; white-space: nowrap; letter-spacing: -.42px; }
.side a svg { width: 18px; height: 18px; }
.side .gap { margin-top: 11px; }

/* editor */
.editor { width: 846px; margin-left: 22px; flex: none; background: #fff; border: 1px solid #e5e5e5; border-top: 0; padding: 0 13px 0 14px; display: flex; flex-direction: column; }
.title { font-size: 20px; line-height: 28px; margin: -9px 0 0 -6px; color: #32373c; letter-spacing: .35px; }
.row-a { height: 463px; margin-top: -19px; padding-top: 20px; background: #f5f5f5; display: flex; flex-direction: column; align-items: center; flex: none; clip-path: inset(20px 0 0 0); }
.inner { width: 789px; flex: none; height: 418px; background: #fff; padding: 0 9px 0 51px; display: flex; flex-direction: column; align-items: center; }
.item { width: 729px; height: 395px; border: 1px dotted #d5d5d5; display: flex; align-items: flex-end; padding: 0 0 12px 11px; gap: 10px; flex: none; margin-bottom: 7px; }
.inner .add { margin-right: 42px; flex: none; }
.row-a > .add { margin-top: 7px; }
.gl { width: 32px; height: 32px; flex: none; border: 1px solid #82c341; background: #fff; color: #000; font: 700 19px/31px "Noto Sans", sans-serif; text-align: center; letter-spacing: -.2px; }
.item p { font-size: 13px; line-height: 16px; color: #444; letter-spacing: -.1px; } .item b { display: block; letter-spacing: -.3px; }
.controls { height: 26px; margin-top: 15px; display: flex; gap: 1px; flex: none; }
.controls span { width: 36px; background: #e5e5e5; border-radius: 2px 2px 0 0; display: flex; align-items: center; justify-content: center; padding-top: 1px; }
.controls .mv { background: #f5f5f5; } .controls .ln { width: 38px; padding-left: 3px; }
.controls .r { margin-left: auto; }
.row-b { flex: 1; background: #f5f5f5; padding: 0 14px; }
.tools { height: 25px; display: flex; gap: 6px; justify-content: center; align-items: center; }
.nested { margin-top: 0; } .nested .mv { background: #fff; }
.inner2 { background: #fff; height: 60px; overflow: hidden; }
.item2 { padding: 11px 0 0 25px; display: flex; gap: 10px; font-size: 13px; line-height: 16px; color: #444; white-space: nowrap; }

/* side boxes */
.meta { width: 280px; margin-left: 21px; font-size: 13px; color: #444; flex: none; }
.mbox { background: #fff; border: 1px solid #e5e5e5; }
.mh { height: 37px; padding: 0 13px 0 12px; display: flex; align-items: center; justify-content: space-between; border-bottom: 1px solid #eee; font-size: 13px; color: #23282d; font-weight: 700; white-space: nowrap; letter-spacing: .25px; }
.mh i { border: 4px solid transparent; border-top: 0; border-bottom: 6px solid #6f757b; margin-left: auto; }
.m1 { height: 288px; margin-top: -15px; }
.sel { height: 27px; border: 1px solid #ddd; margin-bottom: 16px; display: flex; align-items: center; justify-content: flex-end; gap: 11px; background: #fff; font-size: 13px; margin-left: 10px; }
.sel i { width: 17px; height: 26px; margin-right: -1px; border: 1px solid #707070; background: linear-gradient(#f5f5f5, #d5d5d5); display: flex; align-items: center; justify-content: center; }
.sel i::after { content: ""; border: 4px solid transparent; border-top: 5px solid #000; border-bottom: 0; }
.s1 { width: 205px; margin-top: 78px; } .s2 { width: 169px; } .s3 { width: 175px; } .s4 { width: 190px; gap: 6px; }
.m2 { height: 253px; margin-top: 20px; }
.preview { height: 28px; width: 120px; margin: 9px 10px 5px auto; border: 1px solid #ccc; border-radius: 3px; background: #f7f7f7; box-shadow: 0 1px 0 #ccc; color: #555; display: flex; align-items: center; justify-content: flex-end; padding: 1px 10px 0 0; white-space: nowrap; letter-spacing: -.1px; }
.m2 p { height: 34px; display: flex; align-items: center; padding-left: 10px; white-space: nowrap; letter-spacing: -.22px; }
.m2 p b { letter-spacing: -.15px; }
.m2 p.pub { height: 28px; padding-top: 6px; }
.ic { width: 18px; margin-right: 8px; display: flex; justify-content: center; }
u { color: #0073aa; }
.last { display: block; margin-left: 10px; line-height: 18px; height: 26px; }
.foot { height: 50px; border-top: 1px solid #ddd; background: #f5f5f5; padding: 0 10px; display: flex; align-items: center; justify-content: space-between; }
.foot u { color: #a00; letter-spacing: -.1px; }
.foot span { width: 69px; height: 31px; background: #0085ba; border: 1px solid #006799; border-bottom-width: 2px; border-radius: 3px; color: #fff; display: flex; align-items: center; justify-content: center; }
.m3 { margin-top: 21px; height: 50px; }

/* page scrollbar */
.scrollbar { width: 17px; background: #f0f0f0; border-left: 1px solid #e3e3e3; display: flex; flex-direction: column; align-items: center; }
.au { margin-top: 7px; } .ad { margin: auto 0 6px; }
.thumb { width: 15px; height: 65px; margin-top: 34px; border: 1px solid #979797; border-radius: 2px; background: linear-gradient(90deg, #f5f5f5, #d2d3d5); display: flex; align-items: center; justify-content: center; }
.thumb i { width: 7px; height: 8px; background: repeating-linear-gradient(#555 0 1px, #eee 1px 3px); }

/* element picker */
.modal { position: absolute; left: 135px; top: 136px; width: 1079px; height: 361px; background: #fff; box-shadow: 0 2px 6px rgba(0,0,0,.35); z-index: 5; }
.mhead { height: 109px; background: #2b4b80; position: relative; color: #fff; display: flex; flex-direction: column; justify-content: space-between; }
.deco { position: absolute; inset: 0; width: 1079px; height: 109px; }
.mtop { position: relative; display: flex; align-items: center; padding: 14px 23px 0 18px; }
.mtop h2 { font-weight: 300; font-size: 20px; flex: 1; line-height: 31px; letter-spacing: .1px; }
.msearch { width: 200px; height: 31px; background: #fff; border-radius: 4px; display: flex; align-items: center; padding-left: 8px; gap: 8px; color: #a5a5a5; font-size: 12px; font-style: italic; margin-right: 1px; }
.mx { margin-left: 17px; margin-right: -1px; }
.mtabs { position: relative; display: flex; padding-left: 18px; font-size: 14px; white-space: nowrap; letter-spacing: .13px; }
.mtabs span { padding: 0 13px; height: 48px; line-height: 47px; }
.mtabs .on { background: #fff; color: #666; border-radius: 4px 4px 0 0; }
.grid { margin: 24px 17px 0 18px; display: grid; grid-template-columns: repeat(6, 173.850px); grid-auto-rows: 70px; }
.grid > div { padding: 5px 0 0 9px; display: flex; align-items: center; background: #f4f4f4; border-right: 1px solid #fff; border-bottom: 1px solid #fff; }
.grid p { margin: -3px 0 0 9px; font-size: 11px; line-height: 14px; color: #999; white-space: nowrap; letter-spacing: .08px; }
.grid b { display: block; font-size: 14px; line-height: 14px; font-weight: 500; color: #0073aa; margin-bottom: 3px; letter-spacing: .2px; }
.grid .solo { margin-top: 1px; }

/* taskbar */
.taskbar { height: 40px; flex: none; background: linear-gradient(rgba(255,255,255,.35), rgba(255,255,255,0) 3px), linear-gradient(100deg, #1c5b8e 0, #4b9ac6 12%, #3d8fc3 45%, #2b7fc3 60%, #1f68b2 80%, #184684 85%, #153b70 100%); border-top: 1px solid #223f5e; display: flex; align-items: center; color: #fff; }
.tb { width: 62px; height: 38px; display: flex; align-items: center; justify-content: center; position: relative; margin-right: 3px; flex: none; }
.orb { width: 54px; margin: 0; } .ie { width: 68px; margin: 0; }
.wmp { width: 54px; margin: 0; } .chr { width: 69px; margin: 0; padding-left: 4px; }
.btn { width: 59px; border: 1px solid #1c496e; border-radius: 3px; background: linear-gradient(135deg, rgba(255,255,255,.5), rgba(255,255,255,.15)); box-shadow: inset 0 0 0 1px rgba(255,255,255,.5); }
.lit { background: linear-gradient(135deg, #edf7fc, #8ac3e0); }
.badge { position: absolute; right: 18px; top: 19px; font-size: 11px; line-height: 16px; }
.tray { margin-left: auto; display: flex; align-items: center; gap: 10px; }
.clock { width: 74px; margin-left: 5px; text-align: center; display: flex; flex-direction: column; line-height: 17px; font-size: 12px; letter-spacing: -.3px; }
.desk { width: 14px; height: 38px; border: 1px solid #6c8fb8; background: linear-gradient(#54749c, #1d4272); }
```
